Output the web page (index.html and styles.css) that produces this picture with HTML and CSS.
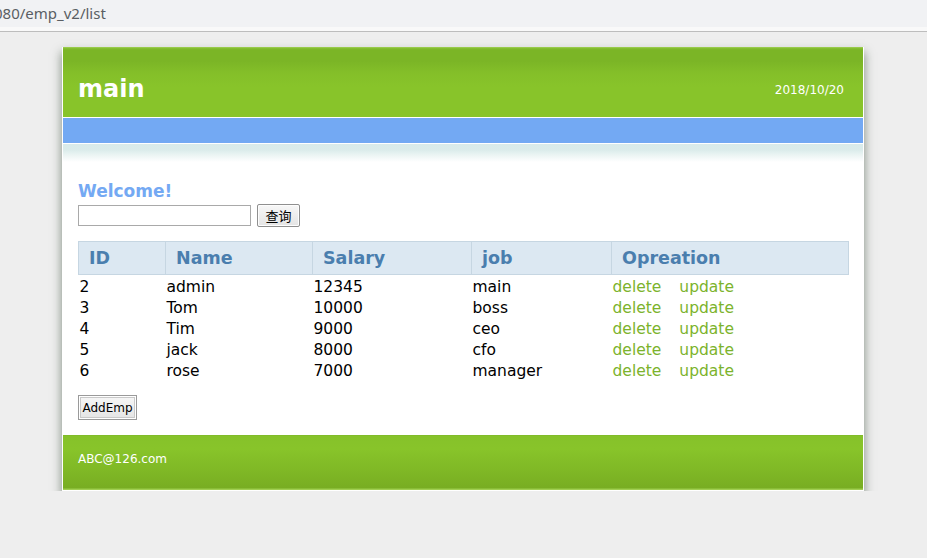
FILE: index.html
```html
<!DOCTYPE html>
<html lang="en">
<head>
<meta charset="utf-8">
<title>emp list</title>
<link rel="stylesheet" href="styles.css">
</head>
<body>
<div class="chrome">
  <div class="address">080/emp_v2/list</div>
</div>
<div class="page">
  <div class="wrap">
    <div class="header">
      <h1 class="logo">main</h1>
      <div class="date">2018/10/20</div>
    </div>
    <div class="nav"></div>
    <div class="fade"></div>
    <div class="content">
      <h2 class="welcome">Welcome!</h2>
      <form class="search">
        <input class="search-input" type="text">
        <button class="btn btn-query" type="button">查询</button>
      </form>
      <table class="emp-table">
        <colgroup>
          <col class="c1"><col class="c2"><col class="c3"><col class="c4"><col class="c5">
        </colgroup>
        <thead>
          <tr><th>ID</th><th>Name</th><th>Salary</th><th>job</th><th>Opreation</th></tr>
        </thead>
        <tbody>
          <tr><td>2</td><td>admin</td><td>12345</td><td>main</td><td><a class="op op-del">delete</a><a class="op">update</a></td></tr>
          <tr><td>3</td><td>Tom</td><td>10000</td><td>boss</td><td><a class="op op-del">delete</a><a class="op">update</a></td></tr>
          <tr><td>4</td><td>Tim</td><td>9000</td><td>ceo</td><td><a class="op op-del">delete</a><a class="op">update</a></td></tr>
          <tr><td>5</td><td>jack</td><td>8000</td><td>cfo</td><td><a class="op op-del">delete</a><a class="op">update</a></td></tr>
          <tr><td>6</td><td>rose</td><td>7000</td><td>manager</td><td><a class="op op-del">delete</a><a class="op">update</a></td></tr>
        </tbody>
      </table>
      <button class="btn btn-add" type="button">AddEmp</button>
    </div>
    <div class="footer">ABC@126.com</div>
  </div>
</div>
</body>
</html>
```
FILE: styles.css
```css
html, body {
  margin: 0;
  padding: 0;
}
body {
  background: #eeeeee;
  font-family: "DejaVu Sans", Verdana, sans-serif;
  color: #000;
  overflow: hidden;
}
.chrome {
  height: 27px;
  background: #f1f2f4;
  border-bottom: 4px solid #f9f9f9;
  overflow: hidden;
}
.address {
  font-family: "Noto Sans", "Open Sans", sans-serif;
  font-size: 15px;
  line-height: 26px;
  color: #5a5e63;
  text-indent: -6px;
  white-space: nowrap;
}
.page {
  border-top: 1px solid #bdbdbd;
  padding: 15px 1px 0 0;
}
.wrap {
  width: 800px;
  margin: 0 auto;
  background: #fff;
  border: 1px solid #fff;
  border-top: none;
  box-shadow: 0 6px 9px 1px rgba(50, 70, 50, 0.5);
}
.header {
  height: 70px;
  display: flex;
  justify-content: space-between;
  align-items: flex-start;
  padding: 0 19px 0 15px;
  background: linear-gradient(#a9d560 0, #89c035 1px, #7bb526 3px, #7bb526 14px, #84bf29 26px, #88c42a 40px, #88c42a 100%);
  border-bottom: 1px solid #fff;
}
.logo {
  margin: 30px 0 0;
  font-size: 24px;
  line-height: 24px;
  font-weight: bold;
  color: #fff;
}
.date {
  margin-top: 37px;
  font-size: 12px;
  line-height: 12px;
  color: #fff;
}
.nav {
  height: 25px;
  background: #73a9f3;
  border-bottom: 1px solid #fff;
}
.fade {
  height: 18px;
  background: linear-gradient(#d9ebea 0, #dbeceb 6px, #eef6f5 12px, #fff 18px);
}
.content {
  padding: 0 15px 15px;
}
.welcome {
  margin: 19px 0 0;
  font-size: 17px;
  line-height: 20px;
  font-weight: bold;
  color: #74a9f3;
}
.search {
  display: flex;
  align-items: center;
  gap: 6px;
  margin: 3px 0 0;
  height: 23px;
}
.search-input {
  box-sizing: border-box;
  width: 173px;
  height: 21px;
  margin: 0;
  border: 1px solid #a9a9a9;
  background: #fff;
  padding: 0 2px;
}
.btn {
  font-family: "DejaVu Sans", Verdana, sans-serif;
  font-size: 12px;
  color: #000;
  background: linear-gradient(#f7f7f7, #e4e4e4);
  border: 1px solid #8f8f8f;
  border-radius: 2px;
  margin: 0;
  padding: 0;
}
.btn-query {
  width: 43px;
  height: 23px;
  font-family: "Noto Sans CJK SC", sans-serif;
  font-size: 13px;
  box-shadow: inset 0 0 0 1px #fdfdfd;
}
.emp-table {
  margin-top: 14px;
  width: 770px;
  border-collapse: collapse;
  table-layout: fixed;
}
.c1 { width: 87px; }
.c2 { width: 147px; }
.c3 { width: 159px; }
.c4 { width: 140px; }
.c5 { width: 237px; }
.emp-table th {
  height: 32px;
  padding: 0 0 0 10px;
  text-align: left;
  font-size: 17.5px;
  font-weight: bold;
  color: #4a7eae;
  background: #dce8f2;
  border: 1px solid #c6d6e2;
}
.emp-table td {
  padding: 0 1px;
  height: 21px;
  font-size: 15.5px;
  line-height: 21px;
  white-space: nowrap;
}
.emp-table tbody tr:first-child td {
  padding-top: 2px;
}
.op {
  color: #7cb32c;
  text-decoration: none;
}
.op-del {
  margin-right: 18px;
}
.btn-add {
  display: block;
  margin-top: 13px;
  width: 59px;
  height: 25px;
  border: 1px solid #9a9a9a;
  border-radius: 0;
  box-shadow: inset 0 0 0 1px #fff, inset 0 0 0 2px #c9c9c9;
}
.footer {
  box-sizing: border-box;
  height: 55px;
  padding: 17px 0 0 15px;
  font-size: 12px;
  line-height: 14px;
  color: #fff;
  background: linear-gradient(#7bb428 0, #86c22a 1px, #88c42a 14px, #80b926 34px, #78ad22 53px, #9ccc4c 54px, #a6d25a 55px);
}
```
